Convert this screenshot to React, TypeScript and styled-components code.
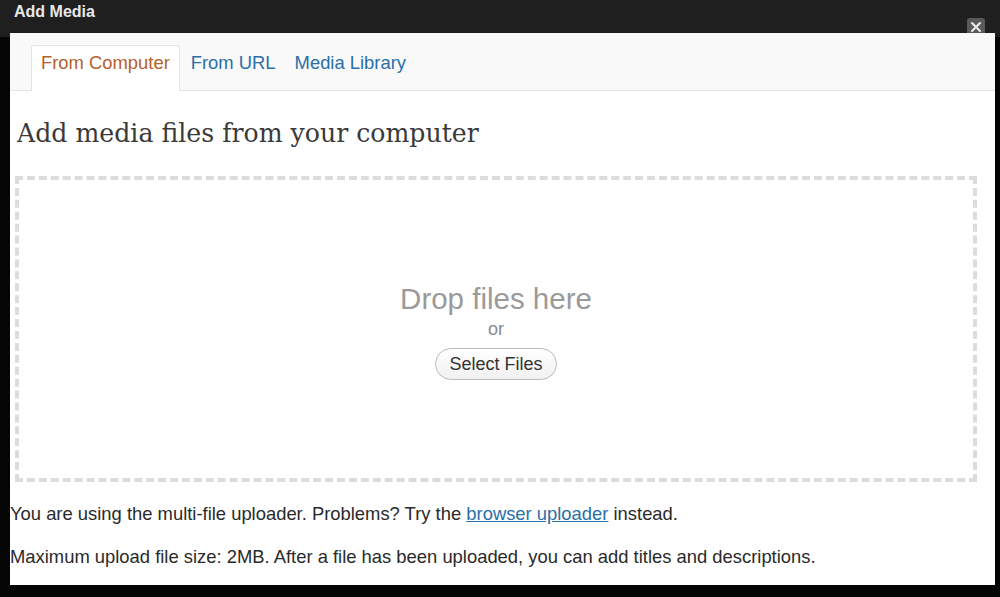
import React from "react";
import styled, { createGlobalStyle } from "styled-components";

const Global = createGlobalStyle`
  html, body { margin: 0; padding: 0; background: #050505; }
  * { box-sizing: border-box; }
`;

const Screen = styled.div`
  width: 1000px;
  height: 597px;
  overflow: hidden;
  background: #050505;
  display: flex;
  flex-direction: column;
  font-family: "Liberation Sans", Arial, sans-serif;
`;

const TitleBar = styled.div`
  height: 37px;
  background: #1f1f1f;
  display: flex;
  align-items: flex-start;
  justify-content: space-between;
  padding: 1px 15px 0 14px;
`;

const Title = styled.div`
  color: #e8e8e8;
  font-weight: bold;
  font-size: 16px;
  line-height: 22px;
`;

const Close = styled.button`
  margin-top: 17px;
  width: 18px;
  height: 18px;
  border: none;
  border-radius: 3px;
  background: #5a5a5a;
  color: #eee;
  padding: 0;
  display: flex;
  align-items: center;
  justify-content: center;
`;

const Panel = styled.div`
  flex: 1;
  margin: -4px 5px 12px 10px;
  background: #fff;
  display: flex;
  flex-direction: column;
`;

const TabBar = styled.div`
  height: 58px;
  background: #f9f9f9;
  border-bottom: 1px solid #e4e4e4;
  display: flex;
  align-items: flex-end;
  padding-left: 21px;
`;

const Tab = styled.div<{ $active?: boolean }>`
  height: 46px;
  margin-bottom: -1px;
  padding: 6px ${(p) => (p.$active ? "9px" : "8px")} 0;
  font-size: 18.4px;
  color: ${(p) => (p.$active ? "#b5612c" : "#2a6fa8")};
  background: ${(p) => (p.$active ? "#fff" : "transparent")};
  border: 1px solid ${(p) => (p.$active ? "#dfe8e0" : "transparent")};
  border-bottom: none;
  border-radius: 3px 3px 0 0;
  margin-right: ${(p) => (p.$active ? "2px" : "1px")};
  line-height: 22px;
`;

const Body = styled.div`
  flex: 1;
  display: flex;
  flex-direction: column;
  padding: 0 10px 0 0;
`;

const Heading = styled.h1`
  margin: 25px 0 0 7px;
  font-family: "DejaVu Serif", Georgia, serif;
  font-weight: normal;
  font-size: 25.2px;
  line-height: 36px;
  color: #3a3a3a;
`;

const DropZone = styled.div`
  margin: 24px 8px 0 5px;
  height: 306px;
  border: 4px dashed #dcdcdc;
  display: flex;
  flex-direction: column;
  align-items: center;
  justify-content: center;
  padding-top: 4px;
`;

const DropText = styled.div`
  font-size: 29.5px;
  color: #9a9a9a;
  line-height: 34px;
`;

const Or = styled.div`
  font-size: 18px;
  color: #888;
  line-height: 22px;
  margin-top: 2px;
`;

const SelectButton = styled.button`
  margin-top: 8px;
  height: 32px;
  padding: 0 13px;
  border: 1px solid #bbb;
  border-radius: 16px;
  background: linear-gradient(#fff, #f1f1f1);
  font-family: "Liberation Sans", Arial, sans-serif;
  font-size: 18px;
  color: #333;
`;

const Note = styled.p<{ $first?: boolean }>`
  margin: ${(p) => (p.$first ? "20px" : "19px")} 0 0 0;
  font-size: 18.4px;
  line-height: 24px;
  color: #2a2a2a;
`;

const Link = styled.a`
  color: #2a6fa8;
  text-decoration: underline;
`;

export default function App() {
  return (
    <Screen>
      <Global />
      <TitleBar>
        <Title>Add Media</Title>
        <Close aria-label="close">
          <svg width="12" height="12" viewBox="0 0 12 12">
            <path d="M2 2 L10 10 M10 2 L2 10" stroke="#eee" strokeWidth="2" strokeLinecap="round" />
          </svg>
        </Close>
      </TitleBar>
      <Panel>
        <TabBar>
          <Tab $active>From Computer</Tab>
          <Tab>From URL</Tab>
          <Tab>Media Library</Tab>
        </TabBar>
        <Body>
          <Heading>Add media files from your computer</Heading>
          <DropZone>
            <DropText>Drop files here</DropText>
            <Or>or</Or>
            <SelectButton>Select Files</SelectButton>
          </DropZone>
          <Note $first>
            You are using the multi-file uploader. Problems? Try the{" "}
            <Link href="#">browser uploader</Link> instead.
          </Note>
          <Note>
            Maximum upload file size: 2MB. After a file has been uploaded, you can add titles and descriptions.
          </Note>
        </Body>
      </Panel>
    </Screen>
  );
}
